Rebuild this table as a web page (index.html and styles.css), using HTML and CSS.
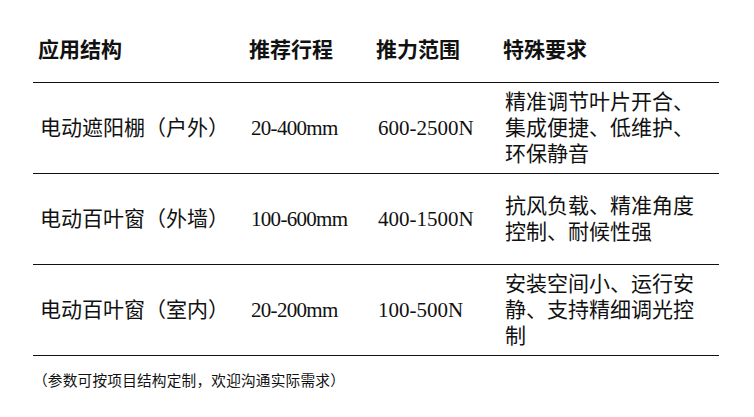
FILE: index.html
```html
<!DOCTYPE html>
<html lang="zh-CN">
<head>
<meta charset="utf-8">
<title>参数表</title>
<link rel="stylesheet" href="styles.css">
</head>
<body>
<div class="wrap">
  <table class="spec">
    <colgroup>
      <col class="c1"><col class="c2"><col class="c3"><col class="c4">
    </colgroup>
    <thead>
      <tr>
        <th>应用结构</th>
        <th>推荐行程</th>
        <th>推力范围</th>
        <th>特殊要求</th>
      </tr>
    </thead>
    <tbody>
      <tr>
        <td>电动遮阳棚（户外）</td>
        <td class="mm">20-400mm</td>
        <td>600-2500N</td>
        <td class="req">精准调节叶片开合、集成便捷、低维护、环保静音</td>
      </tr>
      <tr>
        <td>电动百叶窗（外墙）</td>
        <td class="mm">100-600mm</td>
        <td>400-1500N</td>
        <td class="req">抗风负载、精准角度控制、耐候性强</td>
      </tr>
      <tr>
        <td>电动百叶窗（室内）</td>
        <td class="mm">20-200mm</td>
        <td>100-500N</td>
        <td class="req">安装空间小、运行安静、支持精细调光控制</td>
      </tr>
    </tbody>
  </table>
  <p class="note">（参数可按项目结构定制，欢迎沟通实际需求）</p>
</div>
</body>
</html>
```
FILE: styles.css
```css
html, body {
  margin: 0;
  padding: 0;
  background: #fff;
}
body {
  font-family: "Liberation Serif", "Noto Sans CJK SC", serif;
  color: #111;
}
.wrap {
  padding: 17px 0 0 33px;
}
.spec {
  border-collapse: collapse;
  table-layout: fixed;
  width: 686px;
}
.c1 { width: 211px; }
.c2 { width: 127px; }
.c3 { width: 127px; }
.c4 { width: 221px; }
.spec th {
  height: 65px;
  padding: 0 0 0 5px;
  text-align: left;
  font-size: 21px;
  font-weight: bold;
  vertical-align: middle;
  border-bottom: 1px solid #111;
  line-height: 26px;
}
.spec td {
  height: 90px;
  padding: 0 0 0 7px;
  font-size: 21px;
  line-height: 26px;
  vertical-align: middle;
  border-bottom: 1px solid #111;
}
.spec td.mm {
  letter-spacing: -0.7px;
}
.spec td.req {
  padding-right: 20px;
}
.note {
  margin: 14px 0 0 0;
  font-family: "Noto Sans CJK SC", sans-serif;
  font-size: 14.67px;
  letter-spacing: 0.2px;
  line-height: 20px;
  color: #111;
}
```
